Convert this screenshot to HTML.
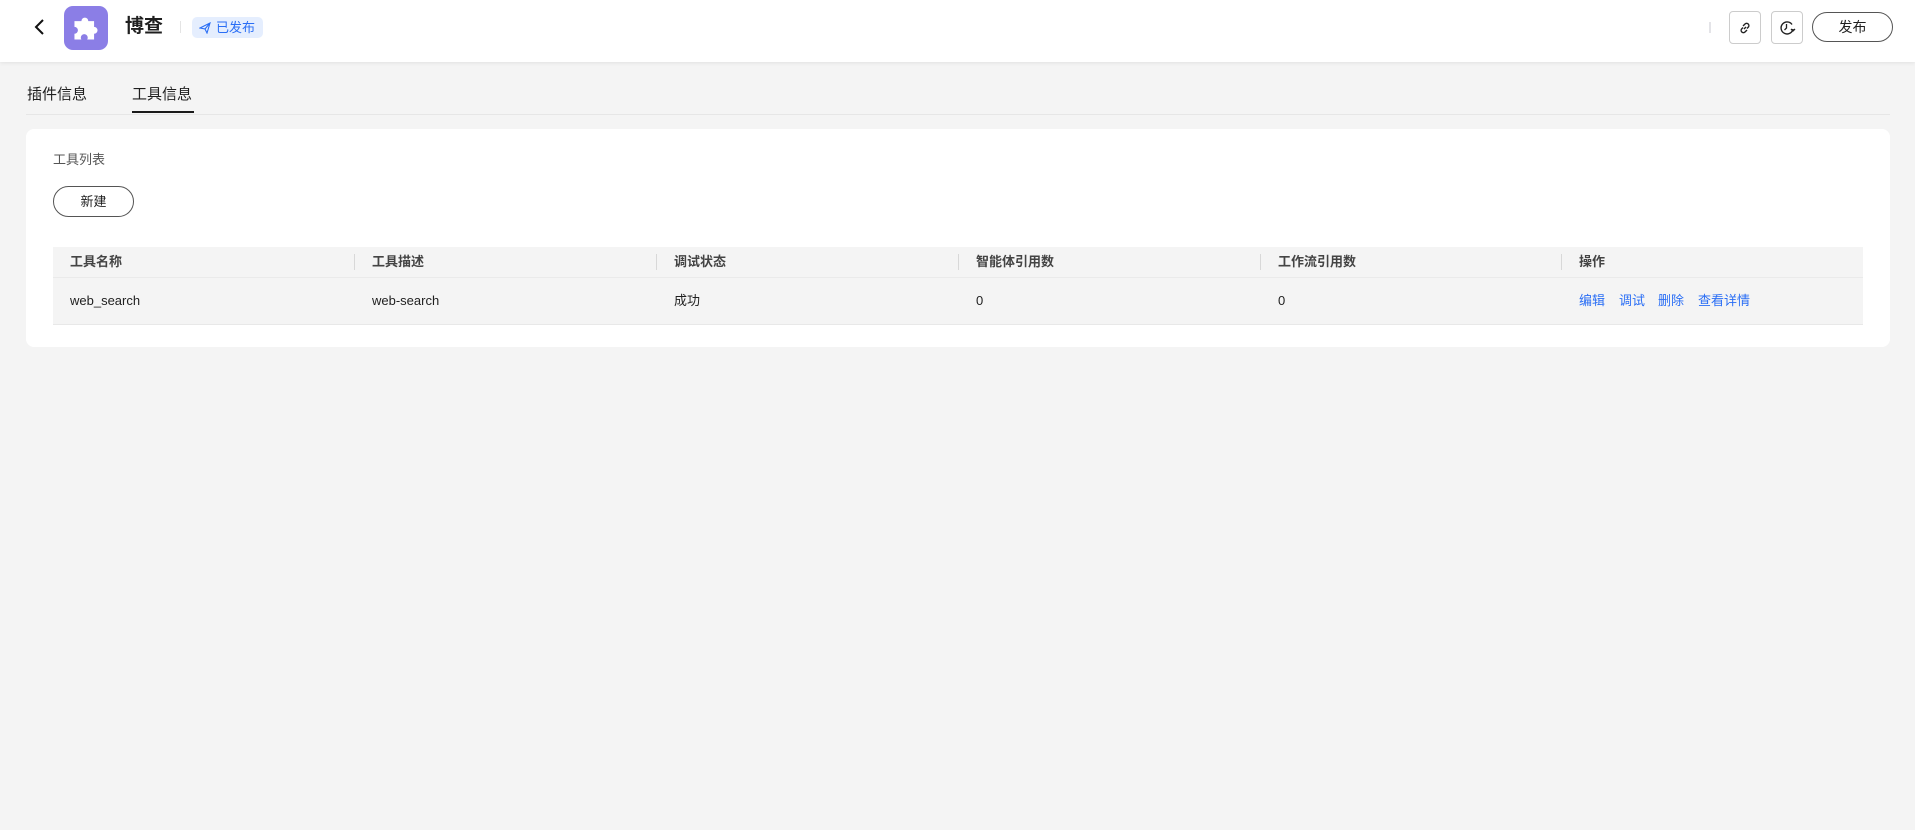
<!DOCTYPE html>
<html><head><meta charset="utf-8"><style>
*{margin:0;padding:0;box-sizing:border-box}
body{width:1915px;height:830px;background:#f4f4f4;font-family:"Liberation Sans","Noto Sans CJK SC",sans-serif;position:relative;overflow:hidden;color:#1f1f1f}
.abs{position:absolute}
.hdr{left:0;top:0;width:1915px;height:62px;background:#fff;box-shadow:0 1px 4px rgba(0,0,0,.08)}
.btn{border:1px solid #ccc;border-radius:4px;width:32px;height:33px;top:11px;display:flex;align-items:center;justify-content:center}
.th{top:247px;height:30px;line-height:30px;font-size:13px;color:#444;font-weight:bold}
.td{top:277px;height:48px;line-height:48px;font-size:13px;color:#1f1f1f}
.dv{top:254px;width:1px;height:16px;background:#d8d8d8}
.lk{color:#2a6ef5;font-size:13px;top:277px;line-height:48px}
</style></head><body>
<div class="abs hdr"></div>
<svg class="abs" style="left:32px;top:18px" width="16" height="18" viewBox="0 0 16 18"><path d="M11 2 L4 9 L11 16" fill="none" stroke="#111" stroke-width="2"/></svg>
<div class="abs" style="left:64px;top:6px;width:44px;height:44px;border-radius:9px;background:#8b7ee6"></div>
<svg class="abs" style="left:71px;top:13px" width="30" height="30" viewBox="0 0 26 26"><path d="M3 7h6a3 3 0 1 1 6 0h5v5a3 3 0 1 1 0 6v5h-6a3 3 0 1 0-5 0H3v-5a3 3 0 1 0 0-6z" fill="#fff"/></svg>
<div class="abs" style="left:125px;top:14px;font-size:19px;font-weight:bold;line-height:26px">博查</div>
<div class="abs" style="left:180px;top:21px;width:1px;height:12px;background:#e4e4e4"></div>
<div class="abs" style="left:192px;top:17px;width:71px;height:21px;border-radius:5px;background:#e5eefe;color:#2a6ef5;font-size:13px;line-height:21px;padding-left:24px">已发布</div>
<svg class="abs" style="left:199px;top:22px" width="12" height="12" viewBox="0 0 12 12"><path d="M1 6 L11 1 L8 11 L6 7 Z M6 7 L11 1" fill="none" stroke="#2a6ef5" stroke-width="1.1"/></svg>
<div class="abs" style="left:1709px;top:22px;width:2px;height:11px;background:#e4e4e8"></div>
<div class="abs btn" style="left:1729px"><svg width="16" height="16" viewBox="0 0 16 16"><path d="M7 9l2-2M6 6l2-2a2.2 2.2 0 0 1 3.2 3.2L10 8.5M10 10l-2 2a2.2 2.2 0 0 1-3.2-3.2L6 7.5" fill="none" stroke="#222" stroke-width="1.4"/></svg></div>
<div class="abs btn" style="left:1771px"><svg width="18" height="18" viewBox="0 0 18 18"><path d="M15 10A6 6 0 1 1 14 5.5" fill="none" stroke="#222" stroke-width="1.4"/><path d="M8.5 5v4l-2 2" fill="none" stroke="#222" stroke-width="1.3"/><path d="M13 10l2 2 2-2" fill="none" stroke="#222" stroke-width="1.3"/></svg></div>
<div class="abs" style="left:1812px;top:12px;width:81px;height:30px;border:1px solid #555;border-radius:15px;text-align:center;line-height:28px;font-size:14px">发布</div>
<div class="abs" style="left:27px;top:84px;font-size:15px;line-height:22px">插件信息</div>
<div class="abs" style="left:132px;top:84px;font-size:15px;line-height:22px">工具信息</div>
<div class="abs" style="left:26px;top:114px;width:1864px;height:1px;background:#e6e6e6"></div>
<div class="abs" style="left:132px;top:111px;width:62px;height:2px;background:#1a1a1a"></div>
<div class="abs" style="left:26px;top:129px;width:1864px;height:218px;background:#fff;border-radius:8px"></div>
<div class="abs" style="left:53px;top:151px;font-size:13px;color:#555;line-height:18px">工具列表</div>
<div class="abs" style="left:53px;top:186px;width:81px;height:31px;border:1px solid #555;border-radius:16px;text-align:center;line-height:29px;font-size:13px">新建</div>
<div class="abs" style="left:53px;top:247px;width:1810px;height:78px;background:#f4f4f4;border-bottom:1px solid #e8e8e8"></div>
<div class="abs" style="left:53px;top:277px;width:1810px;height:1px;background:#eaeaea"></div>
<div class="abs th" style="left:70px">工具名称</div>
<div class="abs th" style="left:372px">工具描述</div>
<div class="abs th" style="left:674px">调试状态</div>
<div class="abs th" style="left:976px">智能体引用数</div>
<div class="abs th" style="left:1278px">工作流引用数</div>
<div class="abs th" style="left:1579px">操作</div>
<div class="abs dv" style="left:354px"></div><div class="abs dv" style="left:656px"></div><div class="abs dv" style="left:958px"></div><div class="abs dv" style="left:1260px"></div><div class="abs dv" style="left:1561px"></div>
<div class="abs td" style="left:70px">web_search</div>
<div class="abs td" style="left:372px">web-search</div>
<div class="abs td" style="left:674px">成功</div>
<div class="abs td" style="left:976px">0</div>
<div class="abs td" style="left:1278px">0</div>
<div class="abs lk" style="left:1579px">编辑</div>
<div class="abs lk" style="left:1619px">调试</div>
<div class="abs lk" style="left:1658px">删除</div>
<div class="abs lk" style="left:1698px">查看详情</div>
</body></html>
